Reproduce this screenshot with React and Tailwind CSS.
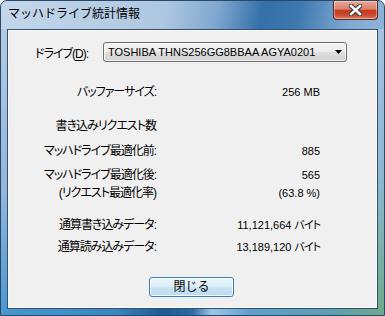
import React from "react";

const ui = "font-['Liberation_Sans','Noto_Sans_CJK_JP',sans-serif] text-black";
const palt = "[font-feature-settings:'palt']";

const rows = [
  { label: "バッファーサイズ:", value: "256 MB", mt: "mt-[22px]" },
  { label: "書き込みリクエスト数", value: "", mt: "mt-[18px]" },
  { label: "マッハドライブ最適化前:", value: "885", mt: "mt-[9px]" },
  { label: "マッハドライブ最適化後:", value: "565", mt: "mt-[8px]" },
  { label: "(リクエスト最適化率)", value: "(63.8 %)", mt: "mt-[2px]" },
  { label: "通算書き込みデータ:", value: "11,121,664", unit: "バイト", mt: "mt-[16px]" },
  { label: "通算読み込みデータ:", value: "13,189,120", unit: "バイト", mt: "mt-[6px]" },
];

function CloseButton() {
  return (
    <div className="w-[45px] h-[19px] rounded-b-[4px] border border-t-0 border-[#5b2a20] bg-[linear-gradient(180deg,#eaa797_0%,#dd806b_45%,#c53b21_52%,#c7462d_75%,#dc7a5e_100%)] shadow-[inset_0_0_0_1px_rgba(255,240,230,0.45)] flex items-center justify-center">
      <svg width="13" height="12" viewBox="0 0 13 12">
        <path d="M2 2 L11 10 M11 2 L2 10" stroke="#3b3b3b" strokeWidth="4.6" strokeLinecap="square" />
        <path d="M2 2 L11 10 M11 2 L2 10" stroke="#ffffff" strokeWidth="2.4" strokeLinecap="square" />
      </svg>
    </div>
  );
}

export default function App() {
  return (
    <div className={`w-[385px] h-[316px] flex flex-col overflow-hidden rounded-t-[7px] border border-[#2a4866] bg-[linear-gradient(100deg,#c4d6ea_0%,#aec7e1_38%,#7ea6cf_50%,#3470a9_60%,#3c77ae_68%,#7fa9d2_80%,#a5c2de_100%)] ${ui}`}>
      {/* title bar */}
      <div className="h-[28px] flex items-start justify-between shrink-0">
        <span className="pl-[7px] pt-[5px] text-[12px] leading-4 text-black">マッハドライブ統計情報</span>
        <div className="mr-[6px]">
          <CloseButton />
        </div>
      </div>

      <div className="flex flex-1">
        <div className="w-[6px] bg-[linear-gradient(180deg,#b3cae3_0%,#8fb6dc_60%,#4b98d4_100%)]" />
        <div className="w-[371px] flex flex-col bg-[#f0f0f0] border border-[#34506c] shadow-[inset_0_0_0_1px_#fafafa]">
          {/* drive selector */}
          <div className="flex items-center pt-[12px] pl-[27px]">
            <span className={`w-[68px] text-[12px] leading-4 mt-[3px] tracking-[-1px] ${palt}`}>
              ドライブ(<span className="underline underline-offset-2">D</span>):
            </span>
            <div className="w-[244px] h-[20px] flex items-center justify-between rounded-[3px] border border-[#707070] bg-[linear-gradient(180deg,#f4f4f4_0%,#ececec_50%,#dedede_52%,#d2d2d2_100%)] shadow-[inset_0_0_0_1px_rgba(255,255,255,0.7)] pl-[4px] pr-[4px]">
              <span className="text-[11px] leading-4">TOSHIBA THNS256GG8BBAA AGYA0201</span>
              <svg width="7" height="4" viewBox="0 0 7 4">
                <polygon points="0,0 7,0 3.5,4" fill="#000" />
              </svg>
            </div>
          </div>

          {/* statistics */}
          <div className="flex flex-col">
            {rows.map((r) => (
              <div key={r.label} className={`flex h-4 leading-4 ${r.mt}`}>
                <span className={`w-[148px] text-right text-[12px] tracking-[-1px] ${palt}`}>{r.label}</span>
                <span className="w-[164px] text-right text-[11px]">
                  {r.value}
                  {r.unit && <span className={`ml-[3px] text-[11px] tracking-[-1px] ${palt}`}>{r.unit}</span>}
                </span>
              </div>
            ))}
          </div>

          <div className="flex justify-center mt-[22px]">
            <button className="w-[85px] h-[20px] rounded-[3px] border border-[#3c7fb1] bg-[linear-gradient(180deg,#eaf5fc_0%,#dcedf8_50%,#c9e3f3_52%,#bcdcf0_100%)] shadow-[inset_0_0_0_1px_rgba(255,255,255,0.8)] text-[12px] leading-4 -ml-[2px]">
              閉じる
            </button>
          </div>
        </div>
        <div className="w-[6px] bg-[linear-gradient(180deg,#a5c2de_0%,#8fb7d5_50%,#6fab8b_100%)]" />
      </div>

      {/* bottom frame */}
      <div className="h-[6px] shrink-0 bg-[linear-gradient(90deg,#4797d3_0%,#3a86c4_30%,#1c5b94_42%,#2a6ba6_50%,#9ac6e8_55%,#5fa0cf_65%,#5d9fb5_85%,#6daa8a_100%)]" />
    </div>
  );
}
